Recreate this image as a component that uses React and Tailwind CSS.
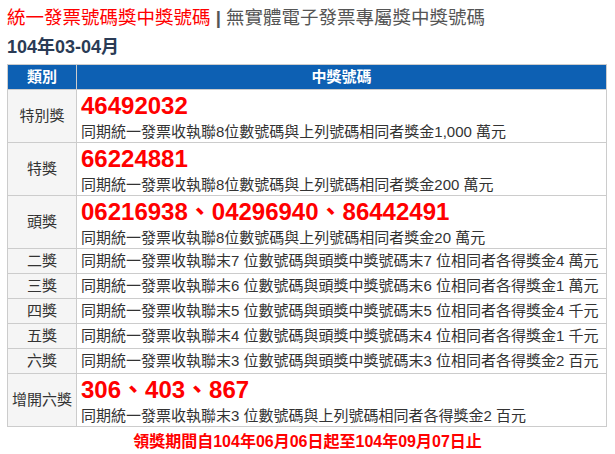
import React from "react";

const FONT = { fontFamily: '"Liberation Sans", "Noto Sans CJK TC", sans-serif' };

// Big prizes show a number line above the description
const rows = [
  {
    label: "特別獎",
    number: "46492032",
    desc: ["同期統一發票收執聯", "8", "位數號碼與上列號碼相同者獎金", "1,000", " 萬元"],
  },
  {
    label: "特獎",
    number: "66224881",
    desc: ["同期統一發票收執聯", "8", "位數號碼與上列號碼相同者獎金", "200", " 萬元"],
  },
  {
    label: "頭獎",
    number: "06216938、04296940、86442491",
    desc: ["同期統一發票收執聯", "8", "位數號碼與上列號碼相同者獎金", "20", " 萬元"],
  },
  { label: "二獎", desc: ["同期統一發票收執聯末", "7", " 位數號碼與頭獎中獎號碼末", "7", " 位相同者各得獎金", "4", " 萬元"] },
  { label: "三獎", desc: ["同期統一發票收執聯末", "6", " 位數號碼與頭獎中獎號碼末", "6", " 位相同者各得獎金", "1", " 萬元"] },
  { label: "四獎", desc: ["同期統一發票收執聯末", "5", " 位數號碼與頭獎中獎號碼末", "5", " 位相同者各得獎金", "4", " 千元"] },
  { label: "五獎", desc: ["同期統一發票收執聯末", "4", " 位數號碼與頭獎中獎號碼末", "4", " 位相同者各得獎金", "1", " 千元"] },
  { label: "六獎", desc: ["同期統一發票收執聯末", "3", " 位數號碼與頭獎中獎號碼末", "3", " 位相同者各得獎金", "2", " 百元"] },
  {
    label: "增開六獎",
    number: "306、403、867",
    desc: ["同期統一發票收執聯末", "3", " 位數號碼與上列號碼相同者各得獎金", "2", " 百元"],
  },
];

const App = () => {
  return (
    <div className="w-[615px] h-[454px] bg-white px-[7px] pt-[4px]" style={FONT}>
      {/* Title */}
      <h1 className="text-[18.5px] leading-[28px] font-normal whitespace-nowrap">
        <span className="text-[#ff0000]">統一發票號碼獎中獎號碼</span>
        <span className="text-[#555] font-bold"> | </span>
        <span className="text-[#555]">無實體電子發票專屬獎中獎號碼</span>
      </h1>
      <h2 className="text-[18px] leading-[28px] font-bold text-[#2a3b55] mt-[1px]">104年03-04月</h2>

      <table className="w-[600px] mt-[3px] border-collapse border border-[#ccc] text-[15px] text-[#333]">
        <thead>
          <tr className="bg-[#0d60b3] text-white font-bold">
            <th className="w-[69px] h-[25px] border border-[#ccc] p-0 leading-[24px]">類別</th>
            <th className="h-[25px] border border-[#ccc] p-0 leading-[24px]">中獎號碼</th>
          </tr>
        </thead>
        <tbody>
          {rows.map((row) => (
            <tr key={row.label} className={row.number ? "h-[53px]" : "h-[25px]"}>
              <td className="bg-[#f5f5f5] border border-[#ccc] text-center p-0 leading-[24px] whitespace-nowrap">
                {row.label}
              </td>
              <td className="border border-[#ccc] pl-[4px] py-0 whitespace-nowrap">
                {row.number && (
                  <div className="text-[24px] leading-[30px] font-bold text-[#ff0000] pt-[1px]">{row.number}</div>
                )}
                <div className={row.number ? "leading-[21px]" : "leading-[24px]"}>
                  {row.desc.join("")}
                </div>
              </td>
            </tr>
          ))}
        </tbody>
      </table>

      {/* Claim period */}
      <p className="text-center text-[16px] font-bold text-[#ff0000] leading-[20px] mt-[5px]">
        領獎期間自104年06月06日起至104年09月07日止
      </p>
    </div>
  );
};

export default App;
